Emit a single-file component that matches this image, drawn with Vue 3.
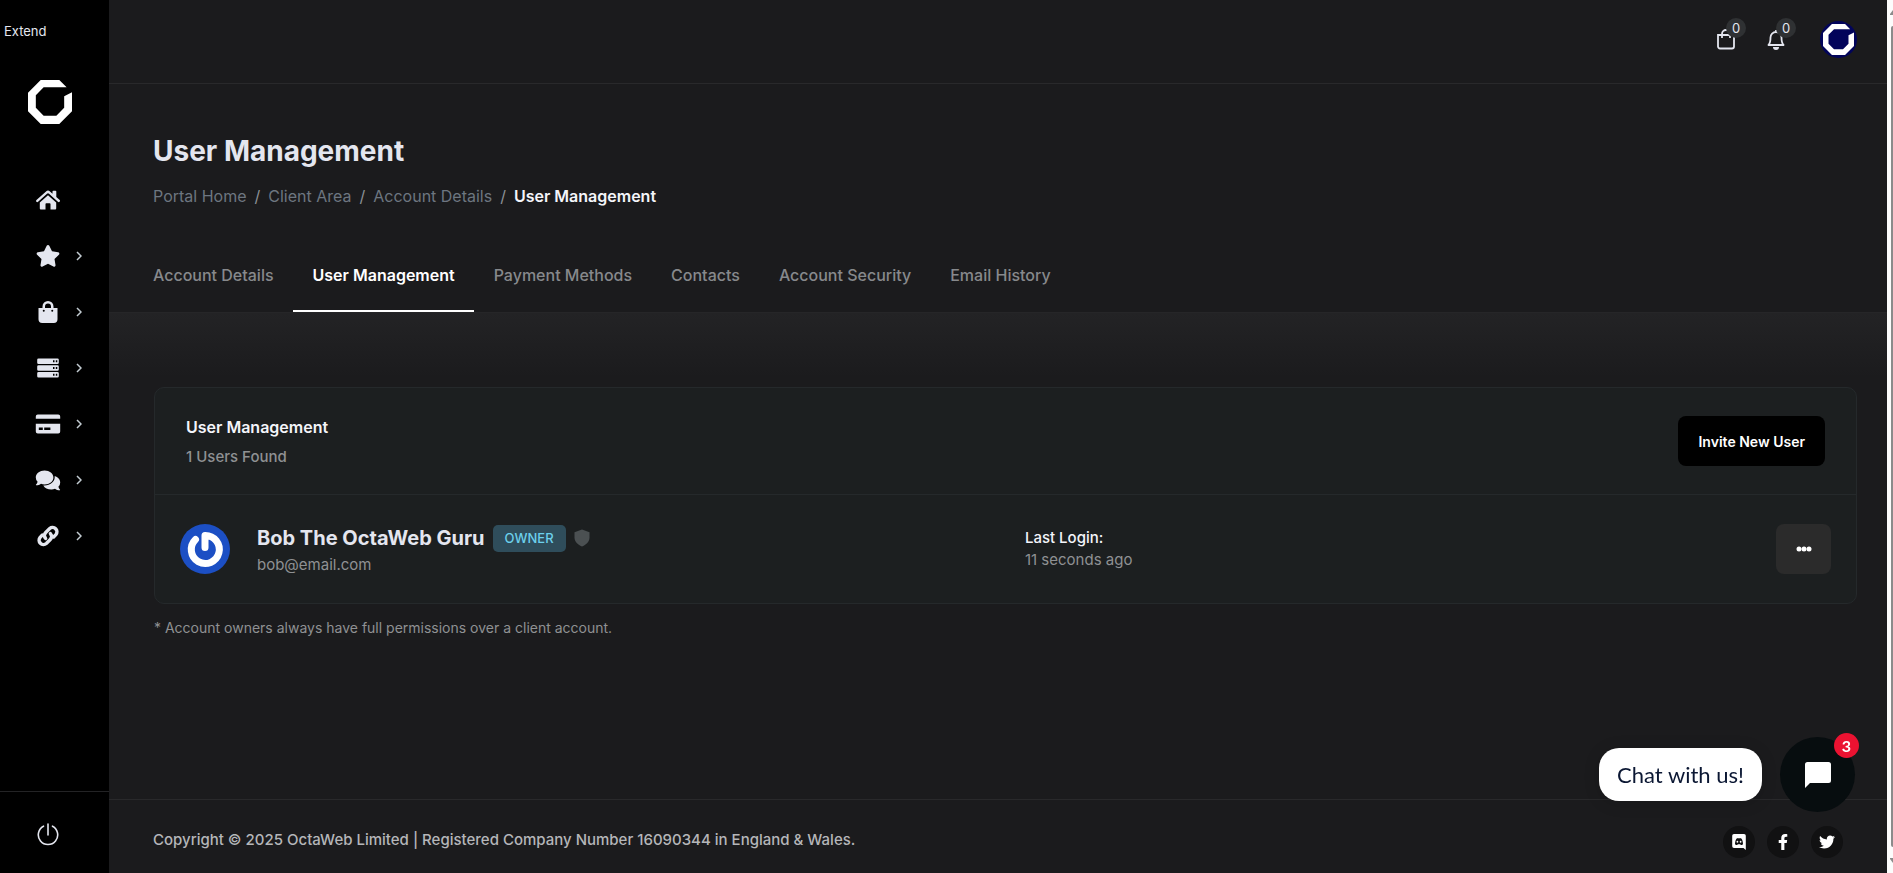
<script setup>
const navItems = [
  { name: 'Home', icon: 'home', sub: false },
  { name: 'Favourites', icon: 'star', sub: true },
  { name: 'Store', icon: 'bag', sub: true },
  { name: 'Services', icon: 'server', sub: true },
  { name: 'Billing', icon: 'card', sub: true },
  { name: 'Support', icon: 'chat', sub: true },
  { name: 'Links', icon: 'link', sub: true },
]
const crumbs = ['Portal Home', 'Client Area', 'Account Details']
const tabs = ['Account Details', 'User Management', 'Payment Methods', 'Contacts', 'Account Security', 'Email History']
const activeTab = 'User Management'
</script>

<template>
  <div class="layout">
    <aside class="sidebar">
      <a href="#" class="extend">Extend</a>
      <a href="#" class="logo" aria-label="OctaWeb">
        <svg width="44" height="44" viewBox="0 0 45 45"><path fill="#fff" d="M13 0H32L39.500 7.500H16L8 15.500V28.500L16 36.500H29L37 28.500V16.500L45 12.500V32L32 45H13L0 32V13Z" /></svg>
      </a>
      <nav class="nav" aria-label="Main">
        <a v-for="item in navItems" :key="item.name" href="#" class="nav-item" :aria-label="item.name">
          <svg class="nav-icon" width="26" height="24" viewBox="0 0 26 24" fill="#e4e6ef">
            <template v-if="item.icon === 'home'">
              <path d="M13 2.500a2 2 0 0 1 1.400.5L17.500 5.800V3.500a.8.8 0 0 1 .8-.8h2.200a.8.8 0 0 1 .8.8v5.600l3.400 3c.6.600.400 1.300-.1 1.700-.5.500-1.200.5-1.700 0L14 5.700a1.500 1.500 0 0 0-2 0l-8.900 8.100c-.5.500-1.200.5-1.700 0s-.5-1.200.1-1.700L11.600 3a2 2 0 0 1 1.400-.5Z" />
              <path d="M13 7.200l8.200 7.400v6a1 1 0 0 1-1 1h-4.700V16a.8.8 0 0 0-.8-.8h-3.400a.8.8 0 0 0-.8.8v5.600H5.800a1 1 0 0 1-1-1v-6Z" />
            </template>
            <path v-else-if="item.icon === 'star'" d="M11.700 1.800a1.450 1.450 0 0 1 2.600 0l2.700 5.500 6.100.9a1.450 1.450 0 0 1 .8 2.500l-4.400 4.300 1 6a1.450 1.450 0 0 1-2.100 1.500L13 19.700l-5.400 2.800a1.450 1.450 0 0 1-2.100-1.500l1-6-4.400-4.300a1.450 1.450 0 0 1 .8-2.500L9 7.300Z" />
            <path v-else-if="item.icon === 'bag'" fill-rule="evenodd" d="M7.500 8V6.500a5.500 5.500 0 0 1 11 0V8h4v11.300a3.700 3.700 0 0 1-3.700 3.700H7.200a3.700 3.700 0 0 1-3.700-3.700V8Zm2.500 0h6V6.500a3 3 0 0 0-6 0ZM8.750 9.800a1 1 0 1 0 0 2 1 1 0 0 0 0-2Zm8.500 0a1 1 0 1 0 0 2 1 1 0 0 0 0-2Z" />
            <path v-else-if="item.icon === 'server'" fill-rule="evenodd" d="M3.500 2.500h19a1.300 1.300 0 0 1 1.300 1.300v2.900A1.300 1.300 0 0 1 22.500 8h-19a1.300 1.300 0 0 1-1.300-1.300V3.800a1.300 1.300 0 0 1 1.300-1.300Zm14.500 1.800v2h1.500v-2Zm2.800 0v2h1.500v-2ZM3.500 9.200h19a1.300 1.300 0 0 1 1.300 1.300v2.900a1.300 1.300 0 0 1-1.300 1.300h-19a1.300 1.300 0 0 1-1.300-1.300v-2.900a1.300 1.300 0 0 1 1.300-1.300ZM18 11v2h1.500v-2Zm2.800 0v2h1.500v-2ZM3.500 16h19a1.300 1.300 0 0 1 1.300 1.300v2.900a1.300 1.300 0 0 1-1.300 1.300h-19a1.300 1.300 0 0 1-1.300-1.300v-2.900A1.300 1.300 0 0 1 3.500 16ZM18 17.800v2h1.500v-2Zm2.800 0v2h1.500v-2Z" />
            <path v-else-if="item.icon === 'card'" fill-rule="evenodd" d="M.8 6.700V4.500a2 2 0 0 1 2-2h20.400a2 2 0 0 1 2 2v2.200Zm0 5H25.200v7.800a2 2 0 0 1-2 2H2.800a2 2 0 0 1-2-2Zm3 3.900v2.300h4v-2.300Zm5.400 0v2.300h6.200v-2.300Z" />
            <template v-else-if="item.icon === 'chat'">
              <path d="M9.600 2.500c4.900 0 8.800 3 8.800 6.900s-3.900 7-8.800 7c-1.300 0-2.500-.2-3.600-.6-1.400 1-3 1.500-4.600 1.500-.5 0-.7-.6-.3-.9.700-.7 1.300-1.700 1.500-2.600A6.300 6.300 0 0 1 .8 9.400c0-3.900 3.900-6.900 8.800-6.900Z" />
              <path d="M19.700 8.100c3.200.9 5.500 3.400 5.500 6.300a6.300 6.300 0 0 1-1.800 4.400c.2.900.8 1.900 1.500 2.600.4.300.2.900-.3.900-1.600 0-3.200-.5-4.600-1.500a10 10 0 0 1-3.600.6c-3.700 0-6.800-1.600-8.100-4h1.300c5.600 0 10.100-3.600 10.100-8.200Z" />
            </template>
            <g v-else fill="none" stroke="#e4e6ef" stroke-width="3.400" stroke-linecap="round">
              <path d="M10.600 14.400c-1.700-1.900-1.400-4.400.1-5.900l4-4a4.400 4.400 0 0 1 6.200 6.200l-2.300 2.300" />
              <path d="M15.400 9.600c1.700 1.900 1.400 4.400-.1 5.900l-4 4a4.400 4.400 0 0 1-6.200-6.200l2.300-2.300" />
            </g>
          </svg>
          <svg v-if="item.sub" class="chevron" width="6" height="10" viewBox="0 0 6 10" fill="none" stroke="#c3ccd2" stroke-width="1.500"><path d="M1 1l4 4-4 4" /></svg>
        </a>
      </nav>
      <button class="power" aria-label="Log out">
        <svg width="22" height="23" viewBox="0 0 22 23" fill="none" stroke="#e4e6ef" stroke-width="1.600" stroke-linecap="round"><path d="M11 1v11M6.500 3.200a9.700 9.700 0 1 0 9 0" /></svg>
      </button>
    </aside>

    <div class="page">
      <header class="topbar">
        <button class="top-btn" aria-label="Cart">
          <svg width="18" height="21" viewBox="0 0 18 21" fill="none" stroke="#e4e6ef" stroke-width="1.800"><path d="M1 6h16v11.500a2 2 0 0 1-2 2H3a2 2 0 0 1-2-2ZM5 9V5a4 4 0 0 1 8 0v4" /></svg>
          <span class="count">0</span>
        </button>
        <button class="top-btn" aria-label="Notifications">
          <svg width="18" height="21" viewBox="0 0 18 21" fill="none" stroke="#e4e6ef" stroke-width="1.800" stroke-linejoin="round"><path d="M1.500 16C3 14.500 3.500 12.500 3.500 8.500a5.500 5.500 0 0 1 11 0c0 4 .5 6 2 7.500Z" /><path d="M9 1v2" /><path fill="#e4e6ef" stroke="none" d="M6 18h6a3 3 0 0 1-6 0Z" /></svg>
          <span class="count">0</span>
        </button>
        <button class="profile" aria-label="Account">
          <svg width="31" height="31" viewBox="0 0 45 45"><path fill="#fff" d="M13 0H32L39.500 7.500H16L8 15.500V28.500L16 36.500H29L37 28.500V16.500L45 12.500V32L32 45H13L0 32V13Z" /></svg>
        </button>
      </header>

      <section class="heading">
        <h1>User Management</h1>
        <nav class="crumbs" aria-label="Breadcrumb">
          <template v-for="crumb in crumbs" :key="crumb">
            <a href="#">{{ crumb }}</a><span class="slash">/</span>
          </template>
          <strong>User Management</strong>
        </nav>
        <nav class="tabs" aria-label="Account">
          <a v-for="tab in tabs" :key="tab" href="#" :class="['tab', { active: tab === activeTab }]">{{ tab }}</a>
        </nav>
      </section>

      <main class="content">
        <section class="card">
          <div class="card-head">
            <div class="card-title">
              <h2>User Management</h2>
              <p class="found">1 Users Found</p>
            </div>
            <button class="invite">Invite New User</button>
          </div>
          <div class="user-row">
            <div class="user">
              <svg class="avatar" width="50" height="50" viewBox="0 0 50 50"><circle cx="25" cy="25" r="25" fill="#1c4fc4" /><g fill="none" stroke="#fff" stroke-width="7" stroke-linecap="round"><path d="M15.500 15.500A14 14 0 1 0 25 11.500V23.500" stroke-linejoin="round" /></g></svg>
              <div class="user-text">
                <div class="user-line">
                  <span class="user-name">Bob The OctaWeb Guru</span>
                  <span class="owner">OWNER</span>
                  <svg width="16" height="18" viewBox="0 0 16 18"><path fill="#4b5052" d="M8 .5 15.500 3.300v5.200c0 4-2.800 7-7.500 8.900C3.300 15.500.5 12.500.5 8.500V3.300Z" /></svg>
                </div>
                <span class="email">bob@email.com</span>
              </div>
            </div>
            <div class="login">
              <span class="login-label">Last Login:</span>
              <span class="login-time">11 seconds ago</span>
            </div>
            <button class="more" aria-label="More actions">
              <svg width="16" height="6" viewBox="0 0 16 6" fill="#fff"><circle cx="3" cy="3" r="2.500" /><circle cx="8" cy="3" r="2.500" /><circle cx="13" cy="3" r="2.500" /></svg>
            </button>
          </div>
        </section>
        <p class="note">* Account owners always have full permissions over a client account.</p>
      </main>

      <footer class="footer">
        <span>Copyright © 2025 OctaWeb Limited | Registered Company Number 16090344 in England &amp; Wales.</span>
        <div class="social">
          <a href="#" aria-label="Discord"><svg width="16" height="16" viewBox="0 0 16 16"><path fill="#fff" fill-rule="evenodd" d="M3 0h10a1.800 1.800 0 0 1 1.800 1.800V16l-2.300-2H3a1.800 1.800 0 0 1-1.800-1.800V1.800A1.800 1.800 0 0 1 3 0Zm1 10.300c.7.600 1.500.8 2.200.8l.6-.8h2.400l.6.800c.7 0 1.500-.2 2.200-.8 0-2-.4-3.800-1.400-5.600-.6-.4-1.200-.6-1.900-.6l-.3.500H7.600l-.3-.5c-.7 0-1.300.2-1.900.6-1 1.800-1.400 3.600-1.400 5.600ZM6.400 6.700a.9 1 0 1 1 0 2 .9 1 0 0 1 0-2Zm3.200 0a.9 1 0 1 1 0 2 .9 1 0 0 1 0-2Z" /></svg></a>
          <a href="#" aria-label="Facebook"><svg width="16" height="16" viewBox="0 0 320 512"><path fill="#fff" d="M279.140 288l14.220-92.660h-88.910v-60.130c0-25.350 12.420-50.060 52.240-50.060h40.420V6.260S260.430 0 225.360 0c-73.220 0-121.080 44.380-121.080 124.720v70.620H22.890V288h81.390v224h100.170V288z" /></svg></a>
          <a href="#" aria-label="Twitter"><svg width="16" height="16" viewBox="0 0 512 512"><path fill="#fff" d="M459.370 151.716c.325 4.548.325 9.097.325 13.645 0 138.720-105.583 298.558-298.558 298.558-59.452 0-114.680-17.219-161.137-47.106 8.447.974 16.568 1.299 25.340 1.299 49.055 0 94.213-16.568 130.274-44.832-46.132-.975-84.792-31.188-98.112-72.772 6.498.974 12.995 1.624 19.818 1.624 9.421 0 18.843-1.300 27.614-3.573-48.081-9.747-84.143-51.980-84.143-102.985v-1.299c13.969 7.797 30.214 12.670 47.431 13.319-28.264-18.843-46.781-51.005-46.781-87.391 0-19.492 5.197-37.360 14.294-52.954 51.655 63.675 129.300 105.258 216.365 109.807-1.624-7.797-2.599-15.918-2.599-24.040 0-57.828 46.782-104.934 104.934-104.934 30.213 0 57.502 12.670 76.670 33.137 23.715-4.548 46.456-13.320 66.599-25.340-7.798 24.366-24.366 44.833-46.132 57.827 21.117-2.273 41.584-8.122 60.426-16.243-14.292 20.791-32.161 39.308-52.628 54.253z" /></svg></a>
        </div>
      </footer>
    </div>

    <div class="scrollbar" aria-hidden="true">
      <svg width="3" height="5" viewBox="0 0 3 5"><path fill="#8b8b8b" d="M3 0v5H0V4Z" /></svg>
      <i></i>
      <svg width="3" height="5" viewBox="0 0 3 5"><path fill="#8b8b8b" d="M0 0h3v5L0 1Z" /></svg>
    </div>

    <div class="chat">
      <span class="chat-text">Chat with us!</span>
      <button class="launcher" aria-label="Open chat">
        <svg width="26" height="26" viewBox="0 0 26 26"><path fill="#fff" d="M2.500 0h21A2.500 2.500 0 0 1 26 2.500v16a2.500 2.500 0 0 1-2.500 2.500H5l-5 5V2.500A2.500 2.500 0 0 1 2.500 0Z" /></svg>
        <span class="unread">3</span>
      </button>
    </div>
  </div>
</template>

<style>
body {
  margin: 0;
  background: #1b1b1d;
}
</style>

<style scoped>
* {
  box-sizing: border-box;
}
.layout {
  display: flex;
  min-height: 100vh;
  font-family: Inter, "Liberation Sans", sans-serif;
  font-size: 16px;
  color: #e4e6ef;
  background: #1b1b1d;
}
h1, h2, p {
  margin: 0;
}
a {
  color: inherit;
  text-decoration: none;
}
button {
  border: 0;
  padding: 0;
  font: inherit;
  color: inherit;
  background: none;
  cursor: pointer;
}
svg {
  display: block;
}

.sidebar {
  position: sticky;
  top: 0;
  display: flex;
  flex-direction: column;
  flex: none;
  width: 109px;
  height: 100vh;
  background: #000;
}
.extend {
  padding: 23px 4px 0;
  font-size: 13px;
  line-height: 16px;
}
.logo {
  padding: 41px 28px 0;
}
.nav {
  display: flex;
  flex-direction: column;
  flex: 1;
  padding-top: 48px;
}
.nav-item {
  display: flex;
  align-items: center;
  gap: 15px;
  height: 56px;
  padding-left: 35px;
}
.power {
  display: flex;
  align-items: center;
  height: 82px;
  padding: 4px 0 0 37px;
  border-top: 1px solid #232325;
}

.page {
  display: flex;
  flex-direction: column;
  flex: 1;
  min-width: 0;
}
.topbar {
  display: flex;
  align-items: center;
  justify-content: flex-end;
  height: 84px;
  padding: 0 30px 4px 0;
  border-bottom: 1px solid #29292b;
}
.top-btn {
  position: relative;
  width: 18px;
  margin-right: 32px;
}
.count {
  position: absolute;
  top: -11px;
  left: 9px;
  width: 20px;
  height: 20px;
  border-radius: 50%;
  background: #2f3133;
  font-size: 13px;
  line-height: 20px;
  text-align: center;
}
.profile {
  display: flex;
  align-items: center;
  justify-content: center;
  width: 37px;
  height: 37px;
  margin-left: 3px;
  border-radius: 50%;
  background: #02045a;
}

.heading {
  padding: 48px 44px 0;
  border-bottom: 1px solid #262628;
}
h1 {
  font-size: 28px;
  line-height: 38px;
  font-weight: 700;
}
.crumbs {
  display: flex;
  gap: 8px;
  margin-top: 14px;
  font-size: 16px;
  line-height: 24px;
  color: #6d7680;
}
.slash {
  color: #8b9096;
}
.crumbs strong {
  font-weight: 600;
  color: #f4f5fa;
}
.tabs {
  display: flex;
  margin: 30px 0 0 -20px;
}
.tab {
  padding: 25px 19px 23px 20px;
  border-bottom: 2px solid transparent;
  font-size: 16px;
  line-height: 24px;
  font-weight: 500;
  color: #87898c;
}
.tab.active {
  border-color: #fff;
  font-weight: 600;
  color: #fff;
}

.content {
  flex: 1;
  padding: 74px 30px 0 45px;
  background: linear-gradient(#232325, #1b1b1d 64px);
}
.card {
  border: 1px solid #25292b;
  border-radius: 10px;
  background: #1c1f20;
}
.card-head {
  display: flex;
  align-items: center;
  justify-content: space-between;
  height: 107px;
  padding: 0 31px;
  border-bottom: 1px solid #25292b;
}
.card-title {
  display: grid;
  gap: 2px;
  padding-top: 2px;
}
h2 {
  font-size: 16px;
  line-height: 28px;
  font-weight: 600;
  color: #f4f5fa;
}
.found {
  font-size: 15px;
  line-height: 28px;
  font-weight: 500;
  color: #8f9193;
}
.invite {
  height: 50px;
  padding: 0 20px;
  border-radius: 8px;
  background: #000;
  font-size: 14px;
  font-weight: 600;
  color: #fff;
}
.user-row {
  display: grid;
  grid-template-columns: 9fr 8fr auto;
  align-items: center;
  height: 108px;
  padding: 0 25px;
}
.user {
  display: flex;
  align-items: center;
  gap: 27px;
}
.user-text {
  padding-top: 4px;
}
.user-line {
  display: flex;
  align-items: center;
  gap: 8px;
}
.user-name {
  font-size: 20px;
  line-height: 28px;
  font-weight: 700;
}
.owner {
  padding: 0 12px;
  border-radius: 5px;
  background: #2f4d5b;
  font-size: 13px;
  line-height: 27px;
  font-weight: 500;
  color: #6cd0ec;
}
.email {
  display: block;
  font-size: 15px;
  line-height: 26px;
  color: #8f9193;
}
.login-label,
.login-time {
  display: block;
  font-size: 15px;
  line-height: 22px;
}
.login-label {
  font-weight: 500;
  color: #f4f5fa;
}
.login-time {
  color: #8f9193;
}
.more {
  display: flex;
  align-items: center;
  justify-content: center;
  width: 55px;
  height: 50px;
  border-radius: 8px;
  background: #2b2b2b;
}
.note {
  padding: 12px 0;
  font-size: 14px;
  line-height: 24px;
  color: #8f9193;
}

.footer {
  display: flex;
  align-items: center;
  justify-content: space-between;
  height: 74px;
  padding: 6px 44px 0 44px;
  border-top: 1px solid #29292b;
  font-size: 15px;
  font-weight: 500;
  color: #b5b6b9;
}
.social {
  display: flex;
  gap: 12px;
  padding-top: 4px;
}
.social a {
  display: flex;
  align-items: center;
  justify-content: center;
  width: 32px;
  height: 32px;
  border-radius: 50%;
  background: #111112;
}

.scrollbar {
  display: flex;
  flex-direction: column;
  align-items: flex-end;
  flex: none;
  gap: 11px;
  width: 6px;
  padding: 10px 0;
  background: #fcfcfc;
}
.scrollbar i {
  flex: 1;
  width: 2px;
  border-radius: 2px 0 0 2px;
  background: #8b8b8b;
}

.chat {
  position: fixed;
  right: 38px;
  bottom: 61px;
  display: flex;
  align-items: center;
  gap: 18px;
}
.chat-text {
  padding: 0 18px;
  border-radius: 20px;
  background: #fff;
  box-shadow: 0 2px 16px rgba(0, 0, 0, 0.15);
  font-family: Lato, "Open Sans", sans-serif;
  font-size: 22px;
  line-height: 53px;
  color: #0b1733;
}
.launcher {
  position: relative;
  display: flex;
  align-items: center;
  justify-content: center;
  width: 75px;
  height: 75px;
  border-radius: 50%;
  background: #070d0f;
}
.unread {
  position: absolute;
  top: -4px;
  right: -4px;
  width: 25px;
  height: 25px;
  border-radius: 50%;
  background: #eb1231;
  font-family: Lato, "Open Sans", sans-serif;
  font-size: 16px;
  font-weight: 700;
  line-height: 25px;
  color: #fff;
}
</style>
